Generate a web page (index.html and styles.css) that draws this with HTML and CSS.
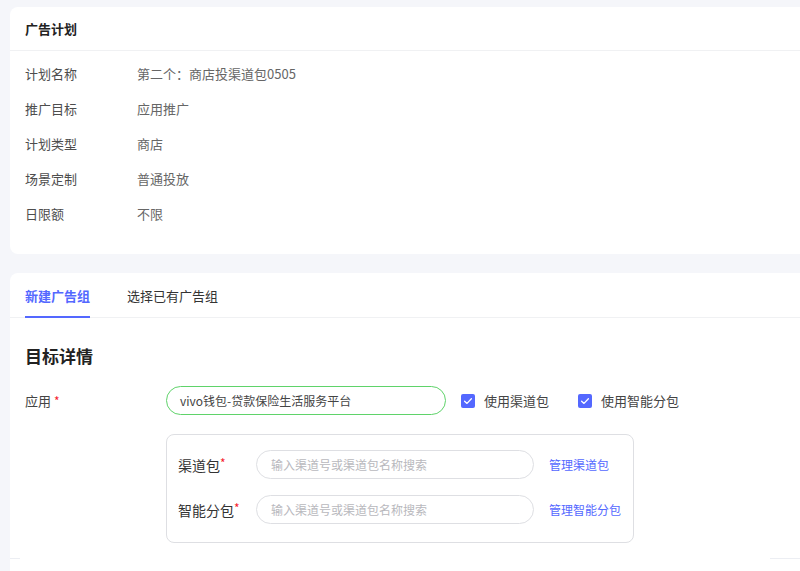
FILE: index.html
```html
<!DOCTYPE html>
<html lang="zh-CN">
<head>
<meta charset="utf-8">
<title>广告计划</title>
<link rel="stylesheet" href="styles.css">
</head>
<body>
<div class="page">
  <section class="card plan">
    <div class="card-head">广告计划</div>
    <div class="info">
      <div class="info-row"><span class="info-label">计划名称</span><span class="info-value">第二个：商店投渠道包0505</span></div>
      <div class="info-row"><span class="info-label">推广目标</span><span class="info-value">应用推广</span></div>
      <div class="info-row"><span class="info-label">计划类型</span><span class="info-value">商店</span></div>
      <div class="info-row"><span class="info-label">场景定制</span><span class="info-value">普通投放</span></div>
      <div class="info-row"><span class="info-label">日限额</span><span class="info-value">不限</span></div>
    </div>
  </section>

  <section class="card group">
    <div class="tabs">
      <div class="tab active">新建广告组</div>
      <div class="tab">选择已有广告组</div>
    </div>
    <div class="group-body">
      <h2 class="section-title">目标详情</h2>
      <div class="form-row">
        <div class="form-label">应用 <span class="req">*</span></div>
        <div class="app-input">vivo钱包-贷款保险生活服务平台</div>
        <label class="check">
          <span class="box"><svg viewBox="0 0 14 14" width="14" height="14"><path d="M3.6 7.2 L6 9.4 L10.4 4.8" fill="none" stroke="#fff" stroke-width="1.3" stroke-linecap="round" stroke-linejoin="round"/></svg></span>
          <span class="check-text">使用渠道包</span>
        </label>
        <label class="check">
          <span class="box"><svg viewBox="0 0 14 14" width="14" height="14"><path d="M3.6 7.2 L6 9.4 L10.4 4.8" fill="none" stroke="#fff" stroke-width="1.3" stroke-linecap="round" stroke-linejoin="round"/></svg></span>
          <span class="check-text">使用智能分包</span>
        </label>
      </div>
      <div class="sub-wrap">
        <div class="sub-box">
          <div class="sub-row">
            <div class="sub-label">渠道包<span class="req">*</span></div>
            <div class="search">输入渠道号或渠道包名称搜索</div>
            <a class="manage">管理渠道包</a>
          </div>
          <div class="sub-row">
            <div class="sub-label">智能分包<span class="req">*</span></div>
            <div class="search">输入渠道号或渠道包名称搜索</div>
            <a class="manage">管理智能分包</a>
          </div>
        </div>
      </div>
      <div class="foot-line">
        <span class="seg-left"></span>
        <span class="seg-gap"></span>
        <span class="seg-right"></span>
      </div>
    </div>
  </section>
</div>
</body>
</html>
```

FILE: styles.css
```css
* { box-sizing: border-box; }
html, body { margin: 0; padding: 0; }
body {
  background: #f5f6fa;
  font-family: "Noto Sans CJK SC", "Noto Sans", "Liberation Sans", sans-serif;
  font-size: 13px;
  color: #333;
  width: 800px;
  height: 571px;
  overflow: hidden;
}
.page {
  padding: 7px 0 0 10px;
}
.card {
  background: #fff;
  border-radius: 8px 0 0 8px;
}
.plan {
  padding-bottom: 23px;
}
.card-head {
  height: 44px;
  line-height: 44px;
  padding-left: 15px;
  font-weight: 700;
  font-size: 13px;
  color: #222;
  border-bottom: 1px solid #f0f1f3;
}
.info {
  padding: 5px 0 0 15px;
}
.info-row {
  display: flex;
  height: 35px;
  align-items: center;
}
.info-label {
  width: 112px;
  color: #4d4d4d;
}
.info-value {
  color: #666;
}
.group {
  margin-top: 19px;
  padding-bottom: 12px;
  border-radius: 8px 0 0 0;
}
.tabs {
  display: flex;
  height: 45px;
  padding-left: 15px;
  border-bottom: 1px solid #f0f1f3;
  gap: 37px;
}
.tab {
  height: 45px;
  padding-top: 13px;
  line-height: 20px;
  font-size: 13px;
  color: #333;
}
.tab.active {
  color: #5468ff;
  font-weight: 700;
  border-bottom: 2px solid #5468ff;
}
.group-body {
  padding: 26px 0 0 15px;
}
.section-title {
  margin: 0;
  font-size: 17px;
  line-height: 24px;
  font-weight: 700;
  color: #222;
}
.form-row {
  display: flex;
  align-items: center;
  margin-top: 18px;
  height: 29px;
}
.form-label {
  width: 141px;
  color: #444;
}
.req {
  color: #f5222d;
  font-size: 12px;
}
.app-input {
  width: 280px;
  height: 29px;
  line-height: 27px;
  border: 1px solid #5fd36a;
  border-radius: 15px;
  padding-left: 13px;
  font-size: 12px;
  color: #444;
}
.check {
  display: flex;
  align-items: center;
  margin-left: 15px;
  margin-right: 14px;
}
.box {
  width: 14px;
  height: 14px;
  border-radius: 2px;
  background: #5468ff;
  display: inline-flex;
}
.check-text {
  margin-left: 9px;
  color: #444;
}
.sub-wrap {
  padding: 19px 0 0 141px;
}
.sub-box {
  width: 468px;
  border: 1px solid #dedfe3;
  border-radius: 8px;
  padding: 15px 0 18px 11px;
  display: flex;
  flex-direction: column;
  gap: 16px;
}
.sub-row {
  display: flex;
  align-items: center;
  height: 29px;
}
.sub-label {
  width: 78px;
  font-size: 14px;
  color: #333;
}
.sub-label .req {
  font-size: 12px;
  vertical-align: top;
  line-height: 16px;
}
.search {
  width: 278px;
  height: 29px;
  line-height: 27px;
  border: 1px solid #dedfe3;
  border-radius: 15px;
  padding-left: 14px;
  font-size: 12px;
  color: #b8b8bd;
}
.manage {
  margin-left: 15px;
  font-size: 12px;
  color: #5468ff;
  cursor: pointer;
}
.foot-line {
  display: flex;
  margin: 15px 0 0 -15px;
  height: 1px;
}
.seg-left {
  width: 10px;
  background: #eceef3;
}
.seg-gap {
  flex: 1;
}
.seg-right {
  width: 30px;
  background: #eceef3;
}
```
